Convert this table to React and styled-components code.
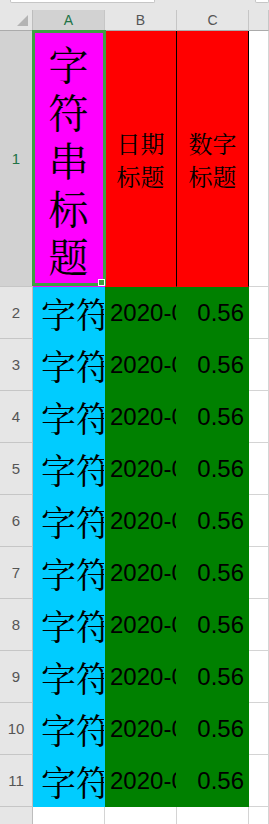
import React from 'react';
import styled, { createGlobalStyle } from 'styled-components';

const GlobalStyle = createGlobalStyle`
  body {
    margin: 0;
    background: #ffffff;
  }
`;

const Sheet = styled.div`
  width: 269px;
  height: 824px;
  overflow: hidden;
  background: #e6e6e6;
  font-family: "Liberation Sans", Arial, sans-serif;
`;

const TopBar = styled.div`
  display: flex;
  justify-content: space-between;
  height: 10px;
  padding-left: 10px;
  box-sizing: border-box;
`;

const InputBox = styled.div`
  width: ${(p) => p.$width}px;
  height: 2px;
  background: #ffffff;
  border: 1px solid #c6c6c6;
  border-top: none;
  border-radius: 0 0 2px 2px;
`;

const Grid = styled.div`
  display: grid;
  grid-template-columns: 33px 72px 72px 72px 20px;
  grid-template-rows: 21px 256px repeat(11, 52px);
  background: #ffffff;
`;

const Corner = styled.div`
  display: flex;
  align-items: flex-end;
  justify-content: flex-end;
  padding: 0 4px 4px 0;
  background: #e6e6e6;
  border-right: 1px solid #bdbdbd;
  border-bottom: 1px solid #ababab;
`;

const ColHeader = styled.div`
  display: flex;
  align-items: center;
  justify-content: center;
  background: ${(p) => (p.$selected ? '#d2d2d2' : '#e6e6e6')};
  color: ${(p) => (p.$selected ? '#217346' : '#555555')};
  font-size: 14px;
  border-right: 1px solid #c6c6c6;
  border-bottom: 1px solid #ababab;
`;

const RowHeader = styled.div`
  display: flex;
  align-items: center;
  justify-content: center;
  background: ${(p) => (p.$selected ? '#d2d2d2' : '#e6e6e6')};
  color: ${(p) => (p.$selected ? '#217346' : '#555555')};
  font-size: 15px;
  border-right: 1px solid #bdbdbd;
  border-bottom: 1px solid #c6c6c6;
`;

const Cell = styled.div`
  position: relative;
  display: flex;
  align-items: center;
  justify-content: ${(p) => p.$align || 'flex-start'};
  padding-left: ${(p) => p.$pl ?? 3}px;
  padding-right: ${(p) => p.$pr ?? 3}px;
  background: ${(p) => p.$bg || '#ffffff'};
  border-right: 1px solid ${(p) => p.$vline || p.$bg || '#d4d4d4'};
  border-bottom: 1px solid ${(p) => p.$bg || '#d4d4d4'};
  overflow: ${(p) => (p.$clip ? 'hidden' : 'visible')};
  min-width: 0;
`;

const CjkText = styled.span`
  font-family: "SimSun", "Noto Serif CJK SC", "Noto Sans CJK SC", serif;
  font-size: ${(p) => p.$size}px;
  line-height: ${(p) => p.$lh}px;
  color: #000000;
  text-align: center;
  word-break: break-all;
`;

const ClipCjk = styled(CjkText)`
  display: block;
  text-align: left;
  white-space: nowrap;
  overflow: hidden;
  max-width: 100%;
`;

const NumText = styled.span`
  display: block;
  max-width: 100%;
  overflow: hidden;
  white-space: nowrap;
  font-family: "Liberation Sans", Arial, sans-serif;
  font-size: 24px;
  color: #000000;
`;

const Selection = styled.div`
  position: absolute;
  left: -1px;
  top: -1px;
  right: -2px;
  bottom: 0;
  border: 3px solid #3f9e43;
  z-index: 2;
  pointer-events: none;
`;

const FillHandle = styled.div`
  position: absolute;
  right: -2px;
  bottom: -3px;
  width: 5px;
  height: 5px;
  background: #3f9e43;
  border: 1px solid #ffffff;
`;

const dataRows = Array.from({ length: 10 }, (_, i) => i + 2);

export default function App() {
  return (
    <Sheet>
      <GlobalStyle />
      <TopBar>
        <InputBox $width={143} />
        <InputBox $width={12} />
      </TopBar>
      <Grid>
        <Corner>
          <svg width="11" height="11" viewBox="0 0 11 11">
            <polygon points="11,0 11,11 0,11" fill="#b4b4b4" />
          </svg>
        </Corner>
        <ColHeader $selected>A</ColHeader>
        <ColHeader>B</ColHeader>
        <ColHeader>C</ColHeader>
        <ColHeader />

        <RowHeader $selected>1</RowHeader>
        <Cell $bg="#ff00ff" $align="center" $pl={0} $pr={0}>
          <CjkText $size={40} $lh={48}>字符串标题</CjkText>
          <Selection>
            <FillHandle />
          </Selection>
        </Cell>
        <Cell $bg="#ff0000" $vline="#000000" $align="center" $pl={10} $pr={10}>
          <CjkText $size={24} $lh={33}>日期标题</CjkText>
        </Cell>
        <Cell $bg="#ff0000" $vline="#000000" $align="center" $pl={10} $pr={10}>
          <CjkText $size={24} $lh={33}>数字标题</CjkText>
        </Cell>
        <Cell />

        {dataRows.map((n) => (
          <React.Fragment key={n}>
            <RowHeader>{n}</RowHeader>
            <Cell $bg="#00ccff" $clip $pl={8} $pr={0}>
              <ClipCjk $size={35} $lh={40}>字符串标题</ClipCjk>
            </Cell>
            <Cell $bg="#008000" $clip $pl={5} $pr={0}>
              <NumText>2020-01-01</NumText>
            </Cell>
            <Cell $bg="#008000" $clip $align="flex-end" $pl={0} $pr={4}>
              <NumText>0.56</NumText>
            </Cell>
            <Cell />
          </React.Fragment>
        ))}

        <RowHeader>12</RowHeader>
        <Cell />
        <Cell />
        <Cell />
        <Cell />
      </Grid>
    </Sheet>
  );
}
